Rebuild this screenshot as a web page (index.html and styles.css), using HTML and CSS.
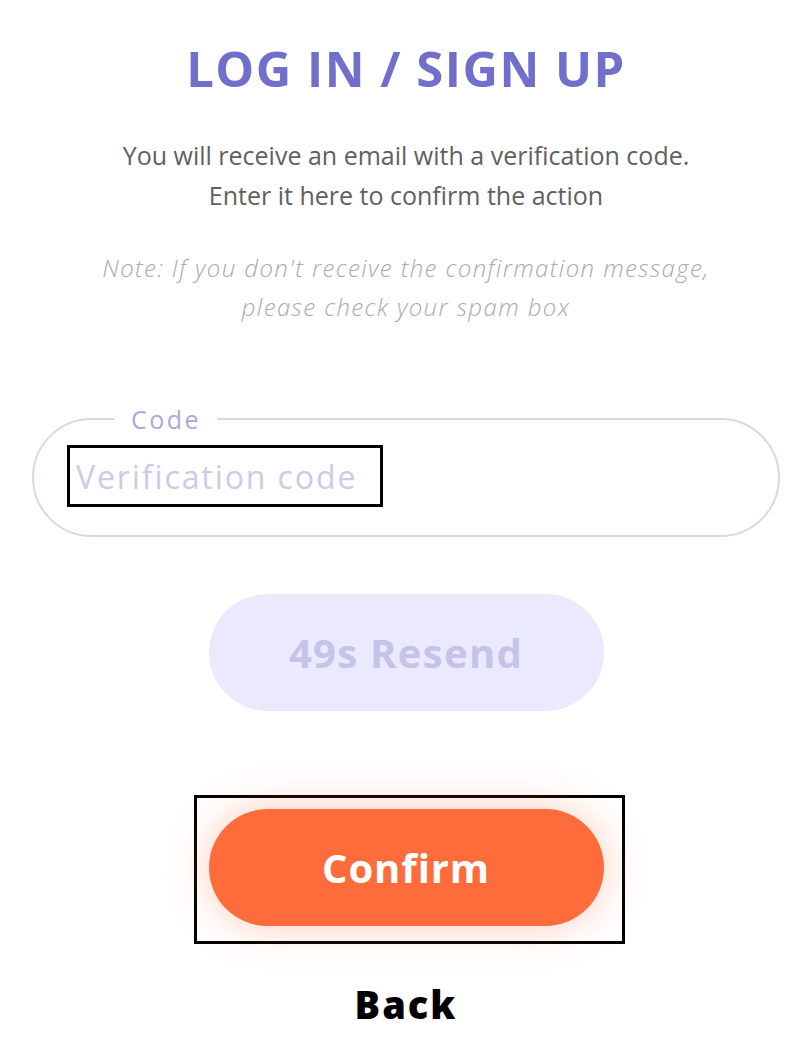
FILE: index.html
```html
<!DOCTYPE html>
<html lang="en">
<head>
<meta charset="UTF-8">
<meta name="viewport" content="width=device-width, initial-scale=1.0">
<title>Log in / Sign up</title>
<link rel="stylesheet" href="styles.css">
</head>
<body>
<div class="container">
    <h1 class="title">LOG IN / SIGN UP</h1>
    <p class="intro">You will receive an email with a verification code.<br>Enter it here to confirm the action</p>
    <p class="note">Note: If you don't receive the confirmation message,<br>please check your spam box</p>

    <form id="codeForm">
        <fieldset class="code-field">
            <legend>Code</legend>
            <input type="text" id="code" name="code" placeholder="Verification code" class="code-input">
        </fieldset>

        <button type="button" class="resend-button" disabled>49s Resend</button>

        <div class="confirm-wrap">
            <button type="submit" class="confirm-button">Confirm</button>
        </div>
    </form>

    <a href="#" class="back-link">Back</a>
</div>
</body>
</html>
```

FILE: styles.css
```css
body {
    margin: 0;
    background: #fff;
    font-family: "Open Sans", "DejaVu Sans", sans-serif;
}
.container {
    padding: 38px 20px 0 32px;
    text-align: center;
}
.title {
    margin: 0;
    font-size: 49px;
    line-height: 60px;
    font-weight: 700;
    letter-spacing: 1.5px;
    color: #7070cc;
}
.intro {
    margin: 37px 0 0;
    font-size: 25px;
    line-height: 40px;
    font-weight: 400;
    color: #606060;
}
.note {
    margin: 33px 0 0;
    font-size: 24px;
    line-height: 39px;
    font-weight: 300;
    font-style: italic;
    letter-spacing: 1.4px;
    color: #aaa;
}
.code-field {
    margin: 78px 0 0;
    padding: 0 0 28px 33px;
    border: 2px solid #d9d7ee;
    border-radius: 60px;
    text-align: left;
}
.code-field legend {
    margin-left: 48px;
    padding: 0 16px;
    font-size: 25px;
    line-height: 30px;
    letter-spacing: 2.5px;
    color: #aaa7dd;
}
.code-input {
    display: block;
    box-sizing: border-box;
    width: 316px;
    height: 62px;
    margin-top: 11px;
    padding: 0 0 0 6px;
    border: 3px solid #000;
    outline: none;
    font-family: inherit;
    font-size: 32px;
    letter-spacing: 1.9px;
    color: #333;
}
.code-input::placeholder {
    color: #cdcbe9;
}
.resend-button,
.confirm-button {
    display: block;
    width: 395px;
    height: 117px;
    border: none;
    border-radius: 59px;
    font-family: inherit;
    font-size: 40px;
    font-weight: 700;
}
.resend-button {
    margin: 57px auto 0;
    background: #ebe9fe;
    color: #c5c3ea;
    letter-spacing: 1.3px;
}
.confirm-wrap {
    display: inline-block;
    margin: 84px 0 0 6px;
    padding: 11px 18px 15px 12px;
    border: 3px solid #000;
}
.confirm-button {
    background: #ff6c3c;
    color: #fff;
    letter-spacing: 0.9px;
    box-shadow: 0 0 40px rgba(255, 108, 60, 0.35);
    cursor: pointer;
}
.back-link {
    display: block;
    margin-top: 38px;
    font-size: 38px;
    line-height: 44px;
    font-weight: 800;
    letter-spacing: 2px;
    color: #000;
    text-decoration: none;
}
```
